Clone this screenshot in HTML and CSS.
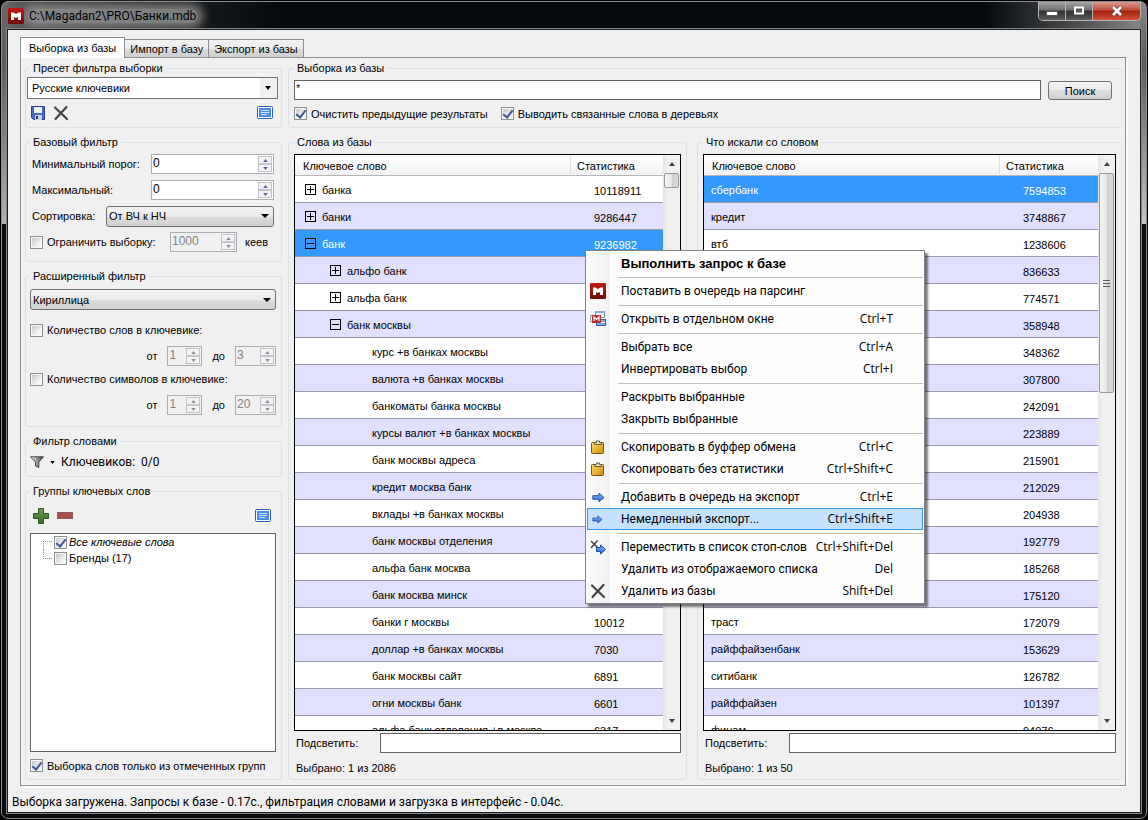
FILE: index.html
```
<!DOCTYPE html>
<html lang="ru">
<head>
  <meta charset="UTF-8" />
  <meta name="viewport" content="width=device-width, initial-scale=1.0" />
  <title>C:\Magadan2\PRO\Банки.mdb</title>
  <link rel="stylesheet" href="styles.css">
</head>

<body>
  <!-- Shared icons -->
  <svg width="0" height="0" class="defs" aria-hidden="true">
    <defs>
      <linearGradient id="g-red" x1="0" y1="0" x2="0" y2="1"><stop offset="0" stop-color="#c41a12"/><stop offset="1" stop-color="#6e0b05"/></linearGradient>
      <linearGradient id="g-gold" x1="0" y1="0" x2="1" y2="1"><stop offset="0" stop-color="#ffdf6b"/><stop offset="1" stop-color="#d08a08"/></linearGradient>
      <linearGradient id="g-blue" x1="0" y1="0" x2="0" y2="1"><stop offset="0" stop-color="#8fc0ff"/><stop offset="1" stop-color="#1f5fd0"/></linearGradient>
      <linearGradient id="g-green" x1="0" y1="0" x2="0" y2="1"><stop offset="0" stop-color="#6d9e58"/><stop offset="1" stop-color="#2f6b22"/></linearGradient>
      <linearGradient id="g-funnel" x1="0" y1="0" x2="1" y2="0"><stop offset="0" stop-color="#fff"/><stop offset="0.5" stop-color="#999"/><stop offset="1" stop-color="#333"/></linearGradient>
    </defs>
    <symbol id="i-logo" viewBox="0 0 16 16">
      <rect width="16" height="16" rx="1" fill="url(#g-red)"/>
      <path d="M3 12V4.500h2.500L8 6l2.500-1.500H13V12h-3V9L8 10 6 9v3z" fill="#fff"/>
    </symbol>
    <symbol id="i-cross" viewBox="0 0 16 16">
      <path d="M2 2.500L14 14M13.500 2L2.500 14" stroke="#444" stroke-width="2.200" stroke-linecap="round" fill="none"/>
    </symbol>
    <symbol id="i-list" viewBox="0 0 16 14">
      <rect x="0.500" y="0.500" width="15" height="12" rx="1" fill="#fff" stroke="#2d62b5"/>
      <rect x="2" y="2" width="12" height="9" fill="#4f8ae8"/>
      <path d="M4 4.500h8M4 6.500h8M4 8.500h6" stroke="#cfe2ff"/>
    </symbol>
    <symbol id="i-clip" viewBox="0 0 16 16">
      <rect x="1.500" y="3.500" width="12" height="11" rx="1" fill="url(#g-gold)" stroke="#7a5510"/>
      <path d="M4.500 5.500v-2h2V2h3v1.500h2v2z" fill="#e9e2c8" stroke="#6b5a2e"/>
    </symbol>
    <symbol id="i-arrow" viewBox="0 0 14 12">
      <path d="M0.800 4h6.700V1.200L13 6l-5.500 4.800V8H0.800z" fill="url(#g-blue)" stroke="#1b4aa0"/>
    </symbol>
    <symbol id="i-up" viewBox="0 0 6 4"><path d="M0 4L3 0l3 4z" fill="currentColor"/></symbol>
    <symbol id="i-down" viewBox="0 0 6 4"><path d="M0 0h6L3 4z" fill="currentColor"/></symbol>
  </svg>

  <div class="window">
    <div class="titlebar">
      <svg class="title-icon" width="16" height="16"><use href="#i-logo"/></svg>
      <span class="title-text">C:\Magadan2\PRO\Банки.mdb</span>
      <div class="win-buttons">
        <button aria-label="Свернуть"><svg width="12" height="10"><rect x="0.500" y="5.500" width="11" height="4" fill="#fff" stroke="#555"/></svg></button>
        <button aria-label="Развернуть"><svg width="12" height="10"><rect x="2" y="1.500" width="8" height="6" fill="#555" stroke="#fff" stroke-width="2"/></svg></button>
        <button class="close" aria-label="Закрыть"><svg width="12" height="10"><path d="M2 1l8 8M10 1L2 9" stroke="#5a3a3a" stroke-width="4"/><path d="M2 1l8 8M10 1L2 9" stroke="#fff" stroke-width="2.600"/></svg></button>
      </div>
    </div>

    <div class="client">
      <div class="tabs" role="tablist">
        <button class="tab active" role="tab">Выборка из базы</button>
        <button class="tab" role="tab">Импорт в базу</button>
        <button class="tab" role="tab">Экспорт из базы</button>
      </div>

      <div class="panel">
        <div class="filters">
          <fieldset class="preset">
            <legend>Пресет фильтра выборки</legend>
            <div class="select-box editable">
              <select aria-label="Пресет"><option>Русские ключевики</option></select>
              <svg width="6" height="4"><use href="#i-down"/></svg>
            </div>
            <div class="toolbar">
              <button class="tool" aria-label="Сохранить">
                <svg width="14" height="14" viewBox="0 0 14 14"><path d="M0.500 0.500h13v13h-11l-2-2z" fill="#4a66c8" stroke="#2c3f8c"/><rect x="3" y="1" width="8" height="6" fill="#eef3ff"/><rect x="4" y="9" width="7" height="5" fill="#c9d2e8"/><rect x="5" y="10" width="2" height="3" fill="#26356f"/></svg>
              </button>
              <button class="tool" aria-label="Удалить"><svg width="16" height="16"><use href="#i-cross"/></svg></button>
              <button class="tool last" aria-label="Список"><svg width="16" height="14"><use href="#i-list"/></svg></button>
            </div>
          </fieldset>

          <fieldset class="basic">
            <legend>Базовый фильтр</legend>
            <div class="row">
              <label for="min">Минимальный порог:</label>
              <div class="spin wide"><input id="min" type="text" value="0"><span class="spin-btns"><button aria-label="Больше"><svg width="5" height="3"><use href="#i-up"/></svg></button><button aria-label="Меньше"><svg width="5" height="3"><use href="#i-down"/></svg></button></span></div>
            </div>
            <div class="row">
              <label for="max">Максимальный:</label>
              <div class="spin wide"><input id="max" type="text" value="0"><span class="spin-btns"><button aria-label="Больше"><svg width="5" height="3"><use href="#i-up"/></svg></button><button aria-label="Меньше"><svg width="5" height="3"><use href="#i-down"/></svg></button></span></div>
            </div>
            <div class="row">
              <label for="sort">Сортировка:</label>
              <div class="select-box sort">
                <select id="sort"><option>От ВЧ к НЧ</option></select>
                <svg width="8" height="4" viewBox="0 0 8 4"><path d="M0 0h8L4 4z"/></svg>
              </div>
            </div>
            <div class="row limit">
              <label class="check"><input type="checkbox"> Ограничить выборку:</label>
              <div class="spin limit-spin off"><input type="text" value="1000" aria-label="Лимит" disabled><span class="spin-btns"><button aria-label="Больше" disabled><svg width="5" height="3"><use href="#i-up"/></svg></button><button aria-label="Меньше" disabled><svg width="5" height="3"><use href="#i-down"/></svg></button></span></div>
              <span class="unit">кеев</span>
            </div>
          </fieldset>

          <fieldset class="extended">
            <legend>Расширенный фильтр</legend>
            <div class="select-box">
              <select aria-label="Алфавит"><option>Кириллица</option></select>
              <svg width="8" height="4" viewBox="0 0 8 4"><path d="M0 0h8L4 4z"/></svg>
            </div>
            <label class="check first"><input type="checkbox"> Количество слов в ключевике:</label>
            <div class="range">
              <span>от</span>
              <div class="spin from off"><input type="text" value="1" aria-label="Слов от" disabled><span class="spin-btns"><button aria-label="Больше" disabled><svg width="5" height="3"><use href="#i-up"/></svg></button><button aria-label="Меньше" disabled><svg width="5" height="3"><use href="#i-down"/></svg></button></span></div>
              <span>до</span>
              <div class="spin to off"><input type="text" value="3" aria-label="Слов до" disabled><span class="spin-btns"><button aria-label="Больше" disabled><svg width="5" height="3"><use href="#i-up"/></svg></button><button aria-label="Меньше" disabled><svg width="5" height="3"><use href="#i-down"/></svg></button></span></div>
            </div>
            <label class="check second"><input type="checkbox"> Количество символов в ключевике:</label>
            <div class="range">
              <span>от</span>
              <div class="spin from off"><input type="text" value="1" aria-label="Символов от" disabled><span class="spin-btns"><button aria-label="Больше" disabled><svg width="5" height="3"><use href="#i-up"/></svg></button><button aria-label="Меньше" disabled><svg width="5" height="3"><use href="#i-down"/></svg></button></span></div>
              <span>до</span>
              <div class="spin to off"><input type="text" value="20" aria-label="Символов до" disabled><span class="spin-btns"><button aria-label="Больше" disabled><svg width="5" height="3"><use href="#i-up"/></svg></button><button aria-label="Меньше" disabled><svg width="5" height="3"><use href="#i-down"/></svg></button></span></div>
            </div>
          </fieldset>

          <fieldset>
            <legend>Фильтр словами</legend>
            <div class="toolbar words">
              <button class="tool funnel" aria-label="Фильтр">
                <svg width="14" height="13" viewBox="0 0 14 13"><path d="M0.500 0.800h13L8.800 6v5.500L5.500 10V6z" fill="url(#g-funnel)" stroke="#444"/></svg>
                <svg width="5" height="3"><use href="#i-down"/></svg>
              </button>
              <span>Ключевиков:&nbsp; 0/0</span>
            </div>
          </fieldset>

          <fieldset class="groups">
            <legend>Группы ключевых слов</legend>
            <div class="toolbar">
              <button class="tool" aria-label="Добавить"><svg width="16" height="16" viewBox="0 0 16 16"><path d="M5.500 0.500h5v5h5v5h-5v5h-5v-5h-5v-5h5z" fill="url(#g-green)" stroke="#2c5722"/></svg></button>
              <button class="tool" aria-label="Убрать"><svg width="16" height="7" viewBox="0 0 16 7"><rect x="0.500" y="0.500" width="15" height="6" fill="#a84f4a" stroke="#8a5a56"/></svg></button>
              <button class="tool last" aria-label="Список"><svg width="16" height="14"><use href="#i-list"/></svg></button>
            </div>
            <div class="tree">
              <label class="node all"><input type="checkbox" checked> Все ключевые слова</label>
              <label class="node"><input type="checkbox"> Бренды (17)</label>
            </div>
            <label class="check only"><input type="checkbox" checked> Выборка слов только из отмеченных групп</label>
          </fieldset>
        </div>

        <div class="results">
          <fieldset class="query">
            <legend>Выборка из базы</legend>
            <div class="query-row">
              <input class="field" type="text" value="*" aria-label="Запрос">
              <button class="search">Поиск</button>
            </div>
            <div class="query-opts">
              <label class="check"><input type="checkbox" checked> Очистить предыдущие результаты</label>
              <label class="check"><input type="checkbox" checked> Выводить связанные слова в деревьях</label>
            </div>
          </fieldset>

          <div class="lists">
            <fieldset class="list-group">
              <legend>Слова из базы</legend>
              <div class="list">
                <div class="list-view">
                  <table>
                    <colgroup><col><col class="stat-col"></colgroup>
                    <thead><tr><th>Ключевое слово</th><th>Статистика</th></tr></thead>
                    <tbody>
                      <tr><td class="l0"><i class="box plus"></i>банка</td><td>10118911</td></tr>
                      <tr><td class="l0"><i class="box plus"></i>банки</td><td>9286447</td></tr>
                      <tr class="selected"><td class="l0"><i class="box"></i>банк</td><td>9236982</td></tr>
                      <tr><td class="l1"><i class="box plus"></i>альфо банк</td><td></td></tr>
                      <tr><td class="l1"><i class="box plus"></i>альфа банк</td><td></td></tr>
                      <tr><td class="l1"><i class="box"></i>банк москвы</td><td></td></tr>
                      <tr><td class="l2">курс +в банках москвы</td><td></td></tr>
                      <tr><td class="l2">валюта +в банках москвы</td><td></td></tr>
                      <tr><td class="l2">банкоматы банка москвы</td><td></td></tr>
                      <tr><td class="l2">курсы валют +в банках москвы</td><td></td></tr>
                      <tr><td class="l2">банк москвы адреса</td><td></td></tr>
                      <tr><td class="l2">кредит москва банк</td><td></td></tr>
                      <tr><td class="l2">вклады +в банках москвы</td><td></td></tr>
                      <tr><td class="l2">банк москвы отделения</td><td></td></tr>
                      <tr><td class="l2">альфа банк москва</td><td></td></tr>
                      <tr><td class="l2">банк москва минск</td><td></td></tr>
                      <tr><td class="l2">банки г москвы</td><td>10012</td></tr>
                      <tr><td class="l2">доллар +в банках москвы</td><td>7030</td></tr>
                      <tr><td class="l2">банк москвы сайт</td><td>6891</td></tr>
                      <tr><td class="l2">огни москвы банк</td><td>6601</td></tr>
                      <tr><td class="l2">альфа банк отделения +в москве</td><td>6317</td></tr>
                    </tbody>
                  </table>
                </div>
                <div class="scroll">
                  <svg width="8" height="4"><use href="#i-up"/></svg>
                  <div class="thumb short"></div>
                  <svg class="scroll-end" width="8" height="4"><use href="#i-down"/></svg>
                </div>
              </div>
              <div class="highlight">
                <label for="hl-base">Подсветить:</label>
                <input class="field" id="hl-base" type="text">
              </div>
              <div class="count">Выбрано: 1 из 2086</div>
            </fieldset>

            <fieldset class="list-group">
              <legend>Что искали со словом</legend>
              <div class="list">
                <div class="list-view also">
                  <table>
                    <colgroup><col><col class="stat-col"></colgroup>
                    <thead><tr><th>Ключевое слово</th><th>Статистика</th></tr></thead>
                    <tbody>
                      <tr class="selected"><td>сбербанк</td><td>7594853</td></tr>
                      <tr><td>кредит</td><td>3748867</td></tr>
                      <tr><td>втб</td><td>1238606</td></tr>
                      <tr><td></td><td>836633</td></tr>
                      <tr><td></td><td>774571</td></tr>
                      <tr><td></td><td>358948</td></tr>
                      <tr><td></td><td>348362</td></tr>
                      <tr><td></td><td>307800</td></tr>
                      <tr><td></td><td>242091</td></tr>
                      <tr><td></td><td>223889</td></tr>
                      <tr><td></td><td>215901</td></tr>
                      <tr><td></td><td>212029</td></tr>
                      <tr><td></td><td>204938</td></tr>
                      <tr><td></td><td>192779</td></tr>
                      <tr><td></td><td>185268</td></tr>
                      <tr><td></td><td>175120</td></tr>
                      <tr><td>траст</td><td>172079</td></tr>
                      <tr><td>райффайзенбанк</td><td>153629</td></tr>
                      <tr><td>ситибанк</td><td>126782</td></tr>
                      <tr><td>райффайзен</td><td>101397</td></tr>
                      <tr><td>финам</td><td>94976</td></tr>
                    </tbody>
                  </table>
                </div>
                <div class="scroll">
                  <svg width="8" height="4"><use href="#i-up"/></svg>
                  <div class="thumb long"><i></i><i></i><i></i></div>
                  <svg class="scroll-end" width="8" height="4"><use href="#i-down"/></svg>
                </div>
              </div>
              <div class="highlight">
                <label for="hl-also">Подсветить:</label>
                <input class="field" id="hl-also" type="text">
              </div>
              <div class="count">Выбрано: 1 из 50</div>
            </fieldset>
          </div>
        </div>
      </div>

      <div class="status">Выборка загружена. Запросы к базе - 0.17с., фильтрация словами и загрузка в интерфейс - 0.04с.</div>
    </div>
  </div>

  <!-- Context menu -->
  <div class="menu" role="menu">
    <button class="item default" role="menuitem"><span class="ico"></span>Выполнить запрос к базе</button>
    <hr>
    <button class="item" role="menuitem"><span class="ico"><svg width="16" height="16"><use href="#i-logo"/></svg></span>Поставить в очередь на парсинг</button>
    <hr>
    <button class="item" role="menuitem"><span class="ico"><svg width="16" height="16" viewBox="0 0 16 16"><rect x="5.500" y="0.500" width="9" height="6" fill="#eef2fa" stroke="#7d8fae"/><rect x="5" y="0" width="10" height="2" fill="#8fa6cf"/><rect x="6.500" y="8.500" width="9" height="6" fill="#7fa6ea" stroke="#3b5ea8"/><rect x="7" y="11" width="8" height="1" fill="#fff"/><rect x="0.500" y="4.500" width="4" height="6" fill="#fff" stroke="#9a9fb0"/><rect x="2" y="4" width="9" height="8" fill="#b3302c"/><path d="M4 10V6l2.500 2.500L9 6v4" fill="none" stroke="#fff" stroke-width="1.200"/></svg></span>Открыть в отдельном окне<kbd>Ctrl+T</kbd></button>
    <hr>
    <button class="item" role="menuitem"><span class="ico"></span>Выбрать все<kbd>Ctrl+A</kbd></button>
    <button class="item" role="menuitem"><span class="ico"></span>Инвертировать выбор<kbd>Ctrl+I</kbd></button>
    <hr>
    <button class="item" role="menuitem"><span class="ico"></span>Раскрыть выбранные</button>
    <button class="item" role="menuitem"><span class="ico"></span>Закрыть выбранные</button>
    <hr>
    <button class="item" role="menuitem"><span class="ico"><svg width="16" height="16"><use href="#i-clip"/></svg></span>Скопировать в буффер обмена<kbd>Ctrl+C</kbd></button>
    <button class="item" role="menuitem"><span class="ico"><svg width="16" height="16"><use href="#i-clip"/></svg></span>Скопировать без статистики<kbd>Ctrl+Shift+C</kbd></button>
    <hr>
    <button class="item" role="menuitem"><span class="ico export"><svg width="13" height="11"><use href="#i-arrow"/></svg></span>Добавить в очередь на экспорт<kbd>Ctrl+E</kbd></button>
    <button class="item hover" role="menuitem"><span class="ico export"><svg width="11" height="9"><use href="#i-arrow"/></svg></span>Немедленный экспорт...<kbd>Ctrl+Shift+E</kbd></button>
    <hr>
    <button class="item" role="menuitem"><span class="ico"><svg width="16" height="16" viewBox="0 0 16 16"><path d="M1 2l7 7M7.500 1.500L1 9" stroke="#444" stroke-width="1.500" fill="none"/><path d="M6.500 8.500h4V6l5 4.500-5 4.500v-2.500h-4z" fill="url(#g-blue)" stroke="#1b4aa0"/></svg></span>Переместить в список стоп-слов<kbd>Ctrl+Shift+Del</kbd></button>
    <button class="item" role="menuitem"><span class="ico"></span>Удалить из отображаемого списка<kbd>Del</kbd></button>
    <button class="item" role="menuitem"><span class="ico"><svg width="16" height="16"><use href="#i-cross"/></svg></span>Удалить из базы<kbd>Shift+Del</kbd></button>
  </div>
</body>
</html>
```
FILE: styles.css
```
* {
  box-sizing: border-box;
}

body {
  margin: 0;
  padding: 1px;
  height: 100vh;
  min-height: 640px;
  background: #000;
  color: #000;
  font-family: "Liberation Sans", Arial, sans-serif;
  font-size: 11px;
  line-height: 14px;
  position: relative;
}

button, input, select {
  font: inherit;
  color: inherit;
  margin: 0;
  padding: 0;
  border: 0;
  background: none;
}

svg {
  display: block;
  flex: none;
}

.defs {
  position: absolute;
}

/* window frame */
.window {
  height: 100%;
  display: flex;
  flex-direction: column;
  border: 1px solid #8b8e90;
  border-radius: 7px;
  padding: 0 5px 5px;
  background:
    linear-gradient(#6a6a6a, #5c5c5c 60px, #b0b0b0 222px, transparent 222px) left / 6px 100% no-repeat,
    linear-gradient(#8a8a8a, #5a5a5a 60px, #c4c4c4 222px, transparent 222px) right / 6px 100% no-repeat,
    linear-gradient(90deg, #6a6a6a, #3c3c3c 4%, #1d2022 14%, #070b0e 24%, #070b0e 86%, #4a4c4d 94%, #8a8a8a 100%) top / 100% 28px no-repeat,
    #0b0d0f;
}

.titlebar {
  flex: none;
  height: 27px;
  display: flex;
  align-items: center;
  gap: 4px;
  padding-left: 1px;
}

.title-text {
  font-family: Roboto, "Open Sans", sans-serif;
  font-size: 12px;
  line-height: 14px;
  padding: 0 2px 0 1px;
  border-radius: 7px;
  background: rgba(150, 150, 150, 0.8);
  box-shadow: 0 0 10px 5px rgba(150, 150, 150, 0.8);
}

.title-icon {
  position: relative;
}

.win-buttons {
  display: flex;
  align-self: flex-start;
  margin-left: auto;
  height: 19px;
  border: 1px solid #b4b4b4;
  border-top: 0;
  border-radius: 0 0 5px 5px;
  overflow: hidden;
}

.win-buttons button {
  width: 27px;
  display: flex;
  align-items: center;
  justify-content: center;
  background: linear-gradient(#a5a5a5, #707070 45%, #303030 50%, #5a5a5a);
  border-right: 1px solid #b4b4b4;
}

.win-buttons .close {
  width: 47px;
  border-right: 0;
  background: linear-gradient(#d99a8e, #c0503c 45%, #a3200c 50%, #cf5335);
}

.client {
  flex: 1;
  min-height: 0;
  display: flex;
  flex-direction: column;
  border: 1px solid #1c1c1c;
  box-shadow: 0 0 0 1px #85888a;
  background: #f0f0f0;
  padding: 7px 14px 0 12px;
}

/* tabs */
.tabs {
  flex: none;
  display: flex;
  align-items: flex-end;
  height: 20px;
}

.tab {
  height: 18px;
  padding: 0 5px;
  border: 1px solid #8c8e93;
  border-bottom: 0;
  border-left: 0;
  background: linear-gradient(#f2f2f2, #ebebeb 50%, #dcdcdc 50%, #cfcfcf);
}

.tab.active {
  height: 21px;
  margin-bottom: -1px;
  padding: 0 8px;
  border-left: 1px solid #8c8e93;
  background: #fff;
  position: relative;
}

.panel {
  flex: 1;
  min-height: 0;
  display: grid;
  grid-template-columns: 257px 1fr;
  gap: 6px;
  padding: 3px 3px 5px 4px;
  border: 1px solid #8c8e93;
  box-shadow: 2px 2px 0 #fafafa;
}

fieldset {
  margin: 0;
  min-width: 0;
  padding: 0 5px;
  border: 1px solid #dbe2e6;
  border-radius: 3px;
}

legend {
  padding: 0 3px;
  line-height: 14px;
}

/* left column */
.filters {
  display: flex;
  flex-direction: column;
  gap: 7px;
  min-height: 0;
}

.filters fieldset {
  flex: none;
  padding-left: 4px;
}

.filters .preset {
  padding: 2px 3px 0 1px;
}

.preset legend {
  margin-left: 3px;
}

.select-box {
  display: flex;
  align-items: center;
  height: 21px;
  border: 1px solid #707070;
  border-radius: 3px;
  background: linear-gradient(#f2f2f2, #ebebeb 50%, #dddddd 50%, #cfcfcf);
  padding-right: 4px;
}

.select-box select {
  flex: 1;
  height: 100%;
  min-width: 0;
  appearance: none;
  outline: none;
  padding-left: 2px;
}

.select-box.editable {
  height: 22px;
  border-radius: 0;
  background: linear-gradient(#f0f0f0, #f0f0f0) right / 17px 100% no-repeat, #fff;
  padding-right: 6px;
}

.editable select {
  padding-left: 4px;
}

.toolbar {
  display: flex;
  align-items: center;
  gap: 8px;
  height: 28px;
  padding: 0 5px 0 4px;
}

.toolbar .last {
  margin-left: auto;
}

.tool {
  display: flex;
  align-items: center;
}

.basic {
  display: flex;
  flex-direction: column;
  gap: 6px;
}

.filters .basic {
  padding: 5px 7px 9px 4px;
}

.row {
  display: flex;
  align-items: center;
  justify-content: space-between;
  height: 20px;
  padding-left: 2px;
}

.row.limit {
  padding-left: 0;
  gap: 8px;
}

.sort {
  width: 168px;
}

.unit {
  width: 29px;
}

.spin {
  display: flex;
  height: 20px;
  border: 1px solid #abadb3;
  background: #fff;
}

.spin input {
  flex: 1;
  min-width: 0;
  height: 16px;
  padding-left: 1px;
  font-size: 12px;
  outline: none;
}

.spin.off {
  background: #f0f0f0;
  color: #838383;
}

.spin.wide {
  width: 123px;
}

.limit-spin {
  width: 67px;
  margin-left: auto;
}

.spin.from {
  width: 35px;
}

.spin.to {
  width: 41px;
}

.spin-btns {
  width: 15px;
  padding: 1px 1px 1px 0;
  display: flex;
  flex-direction: column;
  color: #4e5f9e;
}

.spin-btns button {
  flex: 1;
  display: flex;
  align-items: center;
  justify-content: center;
  border: 1px solid #c3c5cb;
  background: #f3f3f5;
}

.off .spin-btns {
  color: #8d8d8d;
}

.check {
  display: flex;
  align-items: center;
  gap: 4px;
  height: 20px;
}

input[type="checkbox"] {
  appearance: none;
  flex: none;
  position: relative;
  width: 13px;
  height: 13px;
  border: 1px solid #8e8f8f;
  background: linear-gradient(135deg, #c4c8cc, #f4f4f4 75%) content-box, #f6f6f6;
  padding: 1px;
}

input[type="checkbox"]:checked::after {
  content: "";
  position: absolute;
  left: 3px;
  top: 0;
  width: 4px;
  height: 8px;
  border: solid #40549a;
  border-width: 0 2px 2px 0;
  transform: rotate(38deg);
}

.filters .extended {
  padding-top: 6px;
  padding-bottom: 11px;
}

.check.first {
  margin-top: 10px;
}

.check.second {
  margin-top: 3px;
}

.range {
  display: flex;
  align-items: center;
  justify-content: flex-end;
  gap: 10px;
  margin-top: 6px;
}

.toolbar.words {
  padding-left: 0;
  gap: 6px;
  font-family: Roboto, "Open Sans", sans-serif;
  font-size: 12px;
}

.funnel {
  gap: 6px;
}

.filters .groups {
  flex: 1;
  min-height: 0;
  display: flex;
  flex-direction: column;
}

.groups .toolbar {
  flex: none;
  height: 35px;
  padding-left: 3px;
}

.tree {
  flex: 1;
  min-height: 0;
  border: 1px solid #646464;
  background: #fff;
  padding-left: 12px;
}

.node {
  display: flex;
  align-items: center;
  gap: 2px;
  height: 16px;
}

.node::before {
  content: "";
  width: 8px;
  height: 8px;
  align-self: flex-end;
  border: dotted #888;
  border-width: 1px 0 0 1px;
}

.node + .node::before {
  align-self: flex-start;
  border-width: 0 0 1px 1px;
}

.node.all {
  font-style: italic;
}

.check.only {
  flex: none;
  height: 27px;
  white-space: nowrap;
}

/* right part */
.results {
  display: flex;
  flex-direction: column;
  gap: 7px;
  min-width: 0;
  min-height: 0;
}

.query {
  flex: none;
}

.query-row {
  display: flex;
  gap: 7px;
  padding: 5px 4px 0 0;
}

.field {
  flex: 1;
  min-width: 0;
  height: 20px;
  border: 1px solid #646464;
  background: #fff;
  padding: 0 1px 5px;
  outline: none;
}

.search {
  width: 64px;
  height: 19px;
  margin-top: 1px;
  border: 1px solid #707070;
  border-radius: 3px;
  background: linear-gradient(#f2f2f2, #ebebeb 50%, #dddddd 50%, #cfcfcf);
}

.query-opts {
  display: flex;
  align-items: center;
  gap: 13px;
  height: 27px;
}

.lists {
  flex: 1;
  min-height: 0;
  display: grid;
  grid-template-columns: 399fr 425fr;
  gap: 10px;
}

.list-group {
  display: flex;
  flex-direction: column;
  min-height: 0;
  padding-top: 5px;
}

.list {
  flex: 1;
  min-height: 0;
  display: flex;
  border: 1px solid #000;
  background: #fff;
}

.list-view {
  flex: 1;
  min-width: 0;
  overflow: hidden;
}

table {
  width: 100%;
  table-layout: fixed;
  border-collapse: separate;
  border-spacing: 0;
}

.stat-col {
  width: 93px;
}

.also .stat-col {
  width: 99px;
}

th {
  height: 21px;
  padding: 2px 0 0 8px;
  text-align: left;
  font-weight: normal;
  background: linear-gradient(#fff, #f7f8fa 60%, #f0f1f3);
  border-bottom: 1px solid #b5b5b5;
}

th + th {
  border-left: 1px solid #dfe0e2;
  padding-left: 6px;
}

td {
  height: 27px;
  padding: 2px 0 0 7px;
  white-space: nowrap;
  border-bottom: 1px solid #9a9aa4;
}

td + td {
  padding: 4px 0 0 24px;
}

tbody tr:nth-child(even) {
  background: #e1e0ff;
}

tbody tr.selected {
  background: #3399ff;
  color: #fff;
}

.l0 {
  padding-left: 10px;
}

.l1 {
  padding-left: 35px;
}

.l2 {
  padding-left: 77px;
}

.box {
  display: inline-block;
  vertical-align: -1px;
  width: 11px;
  height: 11px;
  margin-right: 6px;
  border: 1px solid #000;
  background: linear-gradient(#000, #000) center / 7px 1px no-repeat;
}

.box.plus {
  background:
    linear-gradient(#000, #000) center / 7px 1px no-repeat,
    linear-gradient(#000, #000) center / 1px 7px no-repeat;
}

.scroll {
  width: 17px;
  display: flex;
  flex-direction: column;
  align-items: center;
  padding: 7px 0;
  background: linear-gradient(90deg, #e6e6e6, #f0f0f0 30%);
  color: #404040;
}

.thumb {
  width: 15px;
  margin-top: 7px;
  border: 1px solid #979797;
  border-radius: 2px;
  background: linear-gradient(90deg, #f5f5f5, #e6e6e6 50%, #cfcfcf 55%, #dcdcdc);
  display: flex;
  flex-direction: column;
  align-items: center;
  justify-content: center;
  gap: 2px;
}

.thumb.short {
  height: 15px;
}

.thumb.long {
  height: 220px;
}

.thumb i {
  width: 7px;
  height: 1px;
  background: #606060;
}

.scroll-end {
  margin-top: auto;
}

.highlight {
  flex: none;
  display: flex;
  align-items: center;
  margin-top: 2px;
  padding-left: 2px;
}

.highlight label {
  width: 84px;
}

.count {
  flex: none;
  height: 26px;
  line-height: 30px;
  padding-left: 2px;
}

.status {
  flex: none;
  margin-left: -8px;
  padding: 8px 0 2px;
  font-family: Roboto, "Open Sans", sans-serif;
  font-size: 12px;
  line-height: 16px;
  white-space: nowrap;
}

/* context menu */
.menu {
  position: absolute;
  left: 585px;
  top: 250px;
  width: 340px;
  padding: 1px;
  border: 1px solid #808080;
  background: linear-gradient(90deg, #fcfcfc, #f1f1f1) left / 24px 100% no-repeat, #fdfdfd;
  box-shadow: 3px 3px 2px rgba(0, 0, 0, 0.5);
  font-family: Roboto, "Open Sans", sans-serif;
  font-size: 12px;
}

.item {
  display: flex;
  align-items: center;
  width: 100%;
  height: 22px;
  padding-right: 29px;
  border: 1px solid transparent;
  text-align: left;
  white-space: nowrap;
}

.item.default {
  padding-top: 2px;
  font-family: "Liberation Sans", Arial, sans-serif;
  font-weight: bold;
  font-size: 13px;
}

.item.hover {
  border-color: #3c97e0;
  background: #c4e1ff;
}

.ico {
  width: 33px;
  padding-left: 2px;
  display: flex;
  align-items: center;
}

.ico.export {
  padding-left: 4px;
}

kbd {
  margin-left: auto;
  font-family: "Open Sans", "Noto Sans", sans-serif;
  font-size: 12px;
}

.menu hr {
  margin: 3px 0 2px 31px;
  border: 0;
  border-top: 1px solid #bdbdbd;
}
```
